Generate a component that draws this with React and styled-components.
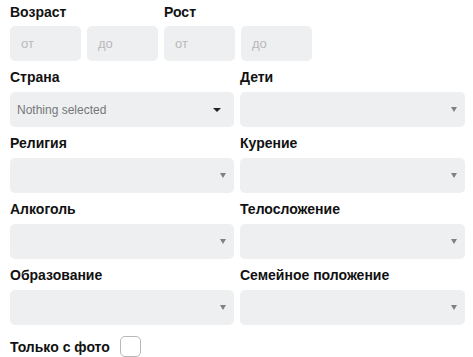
import styled, { createGlobalStyle } from "styled-components";

const GlobalStyle = createGlobalStyle`
  body {
    margin: 0;
    background: #fff;
    font-family: Arial, "Liberation Sans", sans-serif;
  }
`;

const Form = styled.div`
  width: 473px;
  padding: 4px 8px 0 10px;
  box-sizing: border-box;
`;

const Label = styled.div`
  font-size: 14px;
  line-height: 16px;
  font-weight: bold;
  color: #111;
  margin-bottom: ${({ $mb }) => $mb ?? 7}px;
`;

const RangeRow = styled.div`
  display: flex;
  gap: 6px;
  margin-bottom: 8px;
`;

const RangeGroup = styled.div`
  display: flex;
  flex-direction: column;
`;

const RangeInputs = styled.div`
  display: flex;
  gap: 6px;
`;

const SmallInput = styled.div`
  width: 71px;
  height: 35px;
  border-radius: 5px;
  background: #eeeff1;
  box-sizing: border-box;
  padding-left: 11px;
  display: flex;
  align-items: center;
  font-size: 13px;
  color: #b9b9b9;
`;

const Grid = styled.div`
  display: grid;
  grid-template-columns: 224px 225px;
  column-gap: 6px;
  row-gap: 8px;
`;

const Field = styled.div`
  display: flex;
  flex-direction: column;
`;

const Select = styled.div`
  height: 35px;
  border-radius: 5px;
  background: #eeeff1;
  box-sizing: border-box;
  padding: 0 13px 0 7px;
  display: flex;
  align-items: center;
  justify-content: space-between;
  font-size: 12px;
  color: #777;
`;

const Caret = styled.span`
  width: 0;
  height: 0;
  border-left: ${({ $big }) => ($big ? 4 : 3)}px solid transparent;
  border-right: ${({ $big }) => ($big ? 4 : 3)}px solid transparent;
  border-top: ${({ $big }) => ($big ? 4 : 5)}px solid ${({ $big }) => ($big ? "#222" : "#808080")};
  margin-left: auto;
  margin-right: ${({ $big }) => ($big ? 0 : -5)}px;
`;

const PhotoRow = styled.div`
  display: flex;
  align-items: center;
  gap: 10px;
  margin-top: 11px;
`;

const Checkbox = styled.span`
  width: 21px;
  height: 21px;
  box-sizing: border-box;
  border: 1px solid #b8b8b8;
  border-radius: 5px;
  background: #fff;
`;

const fields = [
  ["Страна", "Nothing selected"],
  ["Дети"],
  ["Религия"],
  ["Курение"],
  ["Алкоголь"],
  ["Телосложение"],
  ["Образование"],
  ["Семейное положение"],
];

export default function App() {
  return (
    <>
      <GlobalStyle />
      <Form>
        <RangeRow>
          <RangeGroup>
            <Label $mb={6}>Возраст</Label>
            <RangeInputs>
              <SmallInput>от</SmallInput>
              <SmallInput>до</SmallInput>
            </RangeInputs>
          </RangeGroup>
          <RangeGroup>
            <Label $mb={6}>Рост</Label>
            <RangeInputs>
              <SmallInput>от</SmallInput>
              <SmallInput>до</SmallInput>
            </RangeInputs>
          </RangeGroup>
        </RangeRow>
        <Grid>
          {fields.map(([label, value]) => (
            <Field key={label}>
              <Label>{label}</Label>
              <Select>
                {value}
                <Caret $big={!!value} />
              </Select>
            </Field>
          ))}
        </Grid>
        <PhotoRow>
          <Label $mb={0}>Только с фото</Label>
          <Checkbox />
        </PhotoRow>
      </Form>
    </>
  );
}
